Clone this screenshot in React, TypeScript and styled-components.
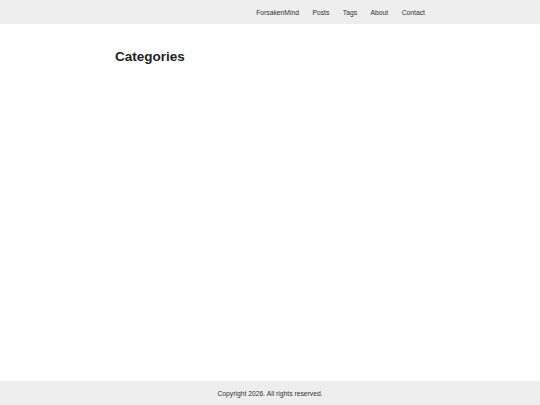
import React from "react";
import styled, { createGlobalStyle } from "styled-components";

const Global = createGlobalStyle`
  html, body { margin: 0; padding: 0; background: #fff; }
  body { font-family: "Liberation Sans", Arial, sans-serif; color: #222; }
  #root { min-height: 100vh; display: flex; flex-direction: column; }
`;

const Page = styled.div`
  min-height: 100vh;
  display: flex;
  flex-direction: column;
`;

const Header = styled.header`
  height: 23.5px;
  background: #eeeeee;
  display: flex;
  justify-content: center;
`;

const Container = styled.div`
  width: 310px;
  display: flex;
`;

const Nav = styled.nav`
  flex: 1;
  display: flex;
  justify-content: flex-end;
  align-items: center;
  gap: 13.5px;
  padding-top: 2.5px;
`;

const NavLink = styled.a`
  font-size: 6.75px;
  color: #333;
  text-decoration: none;
  line-height: 1;
`;

const Main = styled.main`
  flex: 1;
  display: flex;
  justify-content: center;
`;

const Content = styled.div`
  width: 310px;
  padding-top: 25.5px;
`;

const Title = styled.h1`
  margin: 0;
  font-size: 13.5px;
  font-weight: bold;
  color: #222;
`;

const Footer = styled.footer`
  height: 24px;
  background: #eeeeee;
  display: flex;
  align-items: center;
  justify-content: center;
  font-size: 6.75px;
  color: #333;
`;

export default function App() {
  const links = ["ForsakenMind", "Posts", "Tags", "About", "Contact"];
  return (
    <Page>
      <Global />
      <Header>
        <Container>
          <Nav>
            {links.map((l) => (
              <NavLink key={l} href="#">{l}</NavLink>
            ))}
          </Nav>
        </Container>
      </Header>
      <Main>
        <Content>
          <Title>Categories</Title>
        </Content>
      </Main>
      <Footer>Copyright 2026. All rights reserved.</Footer>
    </Page>
  );
}
